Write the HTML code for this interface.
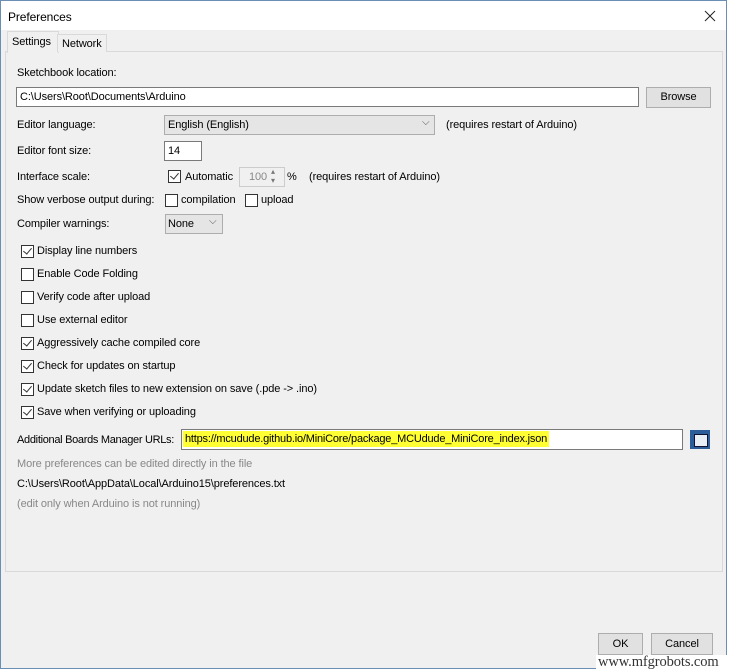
<!DOCTYPE html>
<html><head><style>
body{margin:0;width:730px;height:672px;background:#fff;font-family:"Liberation Sans",sans-serif;font-size:11px;letter-spacing:-0.1px;color:#000;position:relative;overflow:hidden}
.a{position:absolute;white-space:nowrap}
.cb{position:absolute;width:11px;height:11px;border:1px solid #333;background:#fff}
.cb.on::after{content:"";position:absolute;left:3px;top:0px;width:4px;height:7px;border:solid #333;border-width:0 1.3px 1.3px 0;transform:rotate(40deg)}
.inp{position:absolute;background:#fff;border:1px solid #7a7a7a;box-sizing:border-box}
.btn{position:absolute;background:#e1e1e1;border:1px solid #adadad;box-sizing:border-box;text-align:center}
.g{color:#888}
</style></head><body>
<div class="a" style="left:0;top:0;width:727px;height:669px;border:1px solid #6b8fb4;box-sizing:border-box;background:#f0f0f0"></div>
<div class="a" style="left:1px;top:1px;width:725px;height:29px;background:#fff"></div>
<div class="a" style="left:8px;top:10px;font-size:12px">Preferences</div>
<svg class="a" style="left:704px;top:10px" width="12" height="12"><path d="M1 1L11 11M11 1L1 11" stroke="#222" stroke-width="1"/></svg>
<!-- tabs -->
<div class="a" style="left:5px;top:51px;width:718px;height:521px;border:1px solid #d9d9d9;box-sizing:border-box;background:#f0f0f0"></div>
<div class="a" style="left:7px;top:31px;width:50px;height:21px;background:#f0f0f0;border:1px solid #d9d9d9;border-bottom:none"></div>
<div class="a" style="left:12px;top:36px">Settings</div>
<div class="a" style="left:57px;top:34px;width:48px;height:17px;background:#f0f0f0;border:1px solid #d9d9d9;border-bottom:none"></div>
<div class="a" style="left:62px;top:38px">Network</div>

<div class="a" style="left:17px;top:67px">Sketchbook location:</div>
<div class="inp" style="left:16px;top:87px;width:623px;height:20px"></div>
<div class="a" style="left:20px;top:91px">C:\Users\Root\Documents\Arduino</div>
<div class="btn" style="left:646px;top:87px;width:65px;height:21px;line-height:19px">Browse</div>

<div class="a" style="left:17px;top:119px">Editor language:</div>
<div class="a" style="left:164px;top:115px;width:271px;height:20px;background:#e5e5e5;border:1px solid #adadad;box-sizing:border-box"></div>
<div class="a" style="left:168px;top:119px">English (English)</div>
<div class="a" style="left:422px;top:117px;font-size:10px;color:#555">⌵</div>
<div class="a" style="left:446px;top:119px">(requires restart of Arduino)</div>

<div class="a" style="left:17px;top:145px">Editor font size:</div>
<div class="inp" style="left:164px;top:141px;width:38px;height:20px"></div>
<div class="a" style="left:168px;top:145px">14</div>

<div class="a" style="left:17px;top:171px">Interface scale:</div>
<div class="cb on" style="left:168px;top:170px"></div>
<div class="a" style="left:185px;top:171px">Automatic</div>
<div class="a" style="left:239px;top:167px;width:46px;height:20px;border:1px solid #ccc;box-sizing:border-box;background:#f0f0f0"></div>
<div class="a g" style="left:249px;top:171px">100</div>
<div class="a" style="left:271px;top:167px;font-size:8px;color:#777;line-height:9px">▴<br>▾</div>
<div class="a" style="left:287px;top:171px">%</div>
<div class="a" style="left:309px;top:171px">(requires restart of Arduino)</div>

<div class="a" style="left:17px;top:194px">Show verbose output during:</div>
<div class="cb" style="left:165px;top:194px"></div>
<div class="a" style="left:181px;top:194px">compilation</div>
<div class="cb" style="left:245px;top:194px"></div>
<div class="a" style="left:261px;top:194px">upload</div>

<div class="a" style="left:17px;top:218px">Compiler warnings:</div>
<div class="a" style="left:165px;top:214px;width:58px;height:20px;background:#e5e5e5;border:1px solid #adadad;box-sizing:border-box"></div>
<div class="a" style="left:168px;top:218px">None</div>
<div class="a" style="left:209px;top:216px;font-size:10px;color:#555">⌵</div>

<div class="cb on" style="left:21px;top:245px"></div><div class="a" style="left:37px;top:245px">Display line numbers</div>
<div class="cb" style="left:21px;top:268px"></div><div class="a" style="left:37px;top:268px">Enable Code Folding</div>
<div class="cb" style="left:21px;top:291px"></div><div class="a" style="left:37px;top:291px">Verify code after upload</div>
<div class="cb" style="left:21px;top:314px"></div><div class="a" style="left:37px;top:314px">Use external editor</div>
<div class="cb on" style="left:21px;top:337px"></div><div class="a" style="left:37px;top:337px">Aggressively cache compiled core</div>
<div class="cb on" style="left:21px;top:360px"></div><div class="a" style="left:37px;top:360px">Check for updates on startup</div>
<div class="cb on" style="left:21px;top:383px"></div><div class="a" style="left:37px;top:383px">Update sketch files to new extension on save (.pde -&gt; .ino)</div>
<div class="cb on" style="left:21px;top:406px"></div><div class="a" style="left:37px;top:406px">Save when verifying or uploading</div>

<div class="a" style="left:17px;top:434px;letter-spacing:-0.3px">Additional Boards Manager URLs:</div>
<div class="inp" style="left:181px;top:429px;width:502px;height:21px"></div>
<div class="a" style="left:183px;top:431px;padding:2px 2px;background:#ffff33;letter-spacing:-0.2px">https://mcudude.github.io/MiniCore/package_MCUdude_MiniCore_index.json</div>
<div class="a" style="left:690px;top:430px;width:20px;height:19px;background:#2b5d9a;"></div>
<div class="a" style="left:694px;top:434px;width:12px;height:11px;background:#e8eef6;border:1px solid #113"></div>

<div class="a g" style="left:17px;top:458px">More preferences can be edited directly in the file</div>
<div class="a" style="left:17px;top:478px">C:\Users\Root\AppData\Local\Arduino15\preferences.txt</div>
<div class="a g" style="left:17px;top:498px">(edit only when Arduino is not running)</div>

<div class="btn" style="left:598px;top:633px;width:45px;height:22px;line-height:20px">OK</div>
<div class="btn" style="left:651px;top:633px;width:62px;height:22px;line-height:20px">Cancel</div>
<div class="a" style="left:596px;top:655px;width:134px;height:17px;background:#fff"></div>
<div class="a" style="left:598px;top:654px;font-family:'Liberation Serif',serif;font-size:14.5px;color:#333">www.mfgrobots.com</div>
</body></html>
